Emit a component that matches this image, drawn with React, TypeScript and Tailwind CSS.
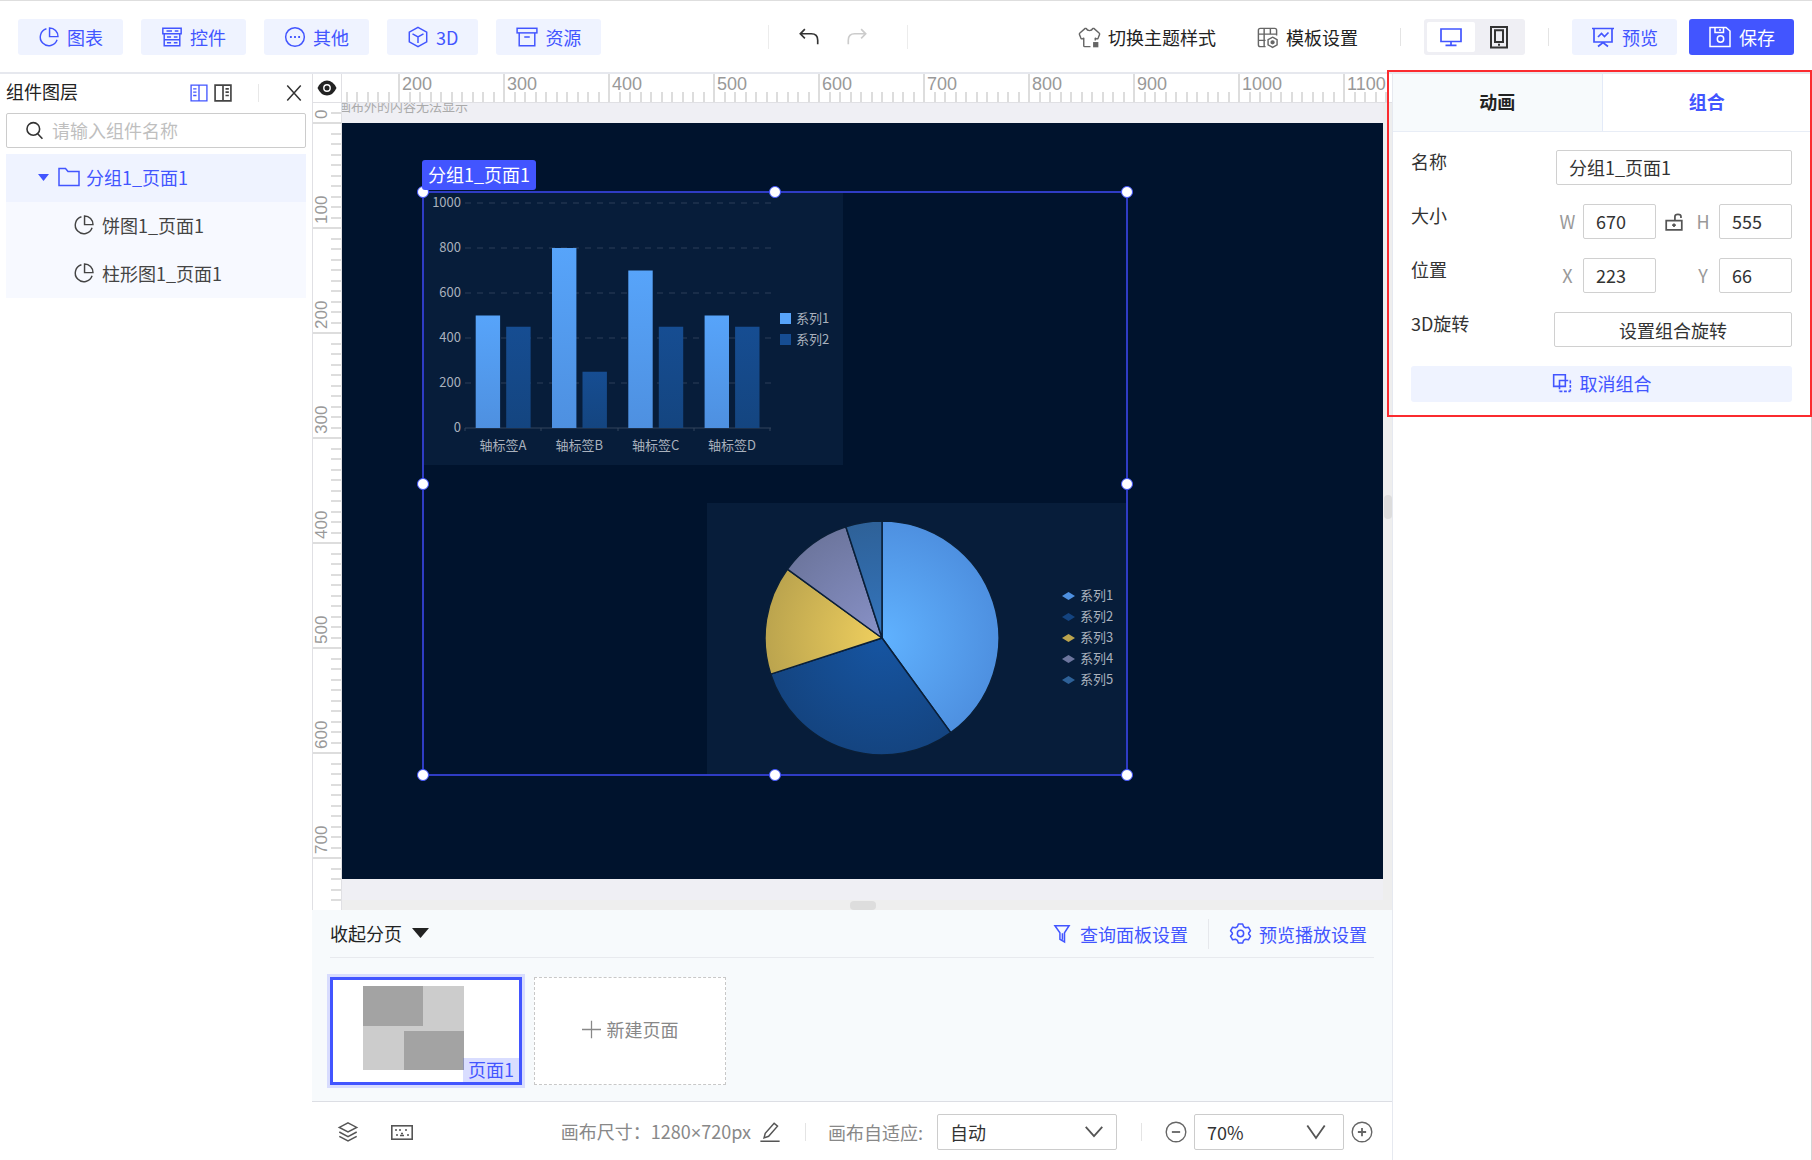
import type { ReactNode } from "react";

function Icon({ size = 22, sw = 1.6, children, className = "" }: { size?: number; sw?: number; children: ReactNode; className?: string }) {
  return (
    <svg width={size} height={size} viewBox="0 0 24 24" fill="none" stroke="currentColor" strokeWidth={sw} className={"shrink-0 " + className} aria-hidden="true">
      {children}
    </svg>
  );
}

const Pie = () => (
  <Icon>
    <path d="M9.2 3A9.4 9.4 0 1 0 20.8 15" />
    <path d="M12.6 2.2V11.6H21.8A9.2 9.2 0 0 0 12.6 2.2Z" />
  </Icon>
);
const Controls = () => (
  <Icon>
    <path d="M2 2.5H22V8.5H2ZM3.5 8.5V21.5H20.5V8.5M3.5 15H20.5M6 5.5H12M15 5.5H19M6.5 12H11M14 12H18M6.5 18.3H11M14 18.3H18" />
  </Icon>
);
const Other = () => (
  <Icon>
    <circle cx="12" cy="12" r="10.2" />
    <path d="M6.5 12H8.5M11 12H13M15.5 12H17.5" strokeWidth="2" />
  </Icon>
);
const Cube = () => (
  <Icon>
    <path d="M12 1.5L21.5 6.8V17.2L12 22.5L2.5 17.2V6.8Z M6 8.5L12 11.8L18 8.5M12 11.8V18.5" />
  </Icon>
);
const Archive = () => (
  <Icon>
    <rect x="1.2" y="2.5" width="21.6" height="5" />
    <path d="M3.5 7.5V21.5H20.5V7.5M9 12H15" />
  </Icon>
);

const tools = [
  { label: "图表", icon: <Pie /> },
  { label: "控件", icon: <Controls /> },
  { label: "其他", icon: <Other /> },
  { label: "3D", icon: <Cube /> },
  { label: "资源", icon: <Archive /> },
];

function Header() {
  return (
    <header className="flex h-[74px] shrink-0 items-center border-t border-b-2 border-t-[#dedede] border-b-[#e6e8ee] bg-white px-[18px] pt-px">
      <nav className="flex gap-[18px]">
        {tools.map((t) => (
          <button key={t.label} type="button" className="flex h-9 items-center gap-[7px] rounded-[3px] bg-[#eff3ff] px-5 text-[#4255ff]">
            {t.icon}
            {t.label}
          </button>
        ))}
      </nav>
      <div className="flex flex-1 items-center justify-center pr-[3px]">
        <span className="h-6 w-px bg-[#ececec]" />
        <button type="button" aria-label="撤销" className="ml-[29px] text-[#333]">
          <Icon size={22} sw={1.8}><path d="M7.5 3.5L2.5 8.5L7.5 13.5M2.5 8.5H14.5Q21.5 8.5 21.5 15.5V20" /></Icon>
        </button>
        <button type="button" aria-label="重做" className="mr-[39px] ml-[26px] text-[#ccc]">
          <Icon size={22} sw={1.8}><path d="M16.5 3.5L21.5 8.5L16.5 13.5M21.5 8.5H9.5Q2.5 8.5 2.5 15.5V20" /></Icon>
        </button>
        <span className="h-6 w-px bg-[#ececec]" />
      </div>
      <div className="flex items-center">
        <button type="button" className="flex items-center gap-[7px] text-[#222]">
          <Icon size={23} sw={1.5} className="text-[#666]">
            <path d="M13 21.5H7Q6 21.5 6 20.5V12.8L4.5 13.4Q3.5 13.6 3 12.6L1.5 8.8Q1.2 8 2 7.3L7.5 2.5H8.5Q9.5 4.8 12 4.8T15.5 2.5H16.5L22 7.3Q22.8 8 22.5 8.8L21 12.6Q20.5 13.6 19.5 13.4L18 12.8V15" strokeLinejoin="round" />
            <rect x="16.5" y="17.5" width="4" height="4" fill="currentColor" />
          </Icon>
          切换主题样式
        </button>
        <button type="button" className="ml-10 flex items-center gap-[7px] text-[#222]">
          <Icon size={23} sw={1.5} className="text-[#666]">
            <path d="M10 21.5H4.5Q2.5 21.5 2.5 19.5V4.5Q2.5 2.5 4.5 2.5H19.5Q21.5 2.5 21.5 4.5V10M2.5 8.5H21.5M8.5 2.5V21.5M15 2.5V8.5M2.5 15H10" />
            <path d="M17.3 11.7L22 14.3V19.7L17.3 22.3L12.6 19.7V14.3Z" />
            <circle cx="17.3" cy="17" r="1.5" fill="currentColor" />
          </Icon>
          模板设置
        </button>
        <span className="ml-[42px] h-[18px] w-px bg-[#e4e4e4]" />
        <div className="ml-[23px] flex h-9 items-center rounded-[3px] bg-[#efeff4] p-[3px]">
          <button type="button" aria-label="桌面端" className="flex h-[30px] w-12 items-center justify-center rounded-[2px] bg-white text-[#4255ff]">
            <Icon size={24} sw={1.7}><path d="M2 4H22V16.5H2ZM12 16.5V20M6.5 20.3H17.5" /></Icon>
          </button>
          <button type="button" aria-label="移动端" className="flex h-[30px] w-[47px] items-center justify-center text-[#333]">
            <Icon size={24} sw={2}><path d="M4 2H20V22.5H4ZM8 5.2H16V17H8ZM11 19.8H13" /></Icon>
          </button>
        </div>
        <span className="ml-[23px] h-[18px] w-px bg-[#e4e4e4]" />
        <button type="button" className="ml-[23px] flex h-9 items-center gap-[7px] rounded-[3px] bg-[#eff3ff] px-[19px] text-[#4255ff]">
          <Icon size={24} sw={1.7}><path d="M1 3.5H23M3 3.5V17H21V3.5M7 12L10.5 8.5L13.5 11.5L17.5 7.5M7 21.5L12 17.5L17 21.5" /></Icon>
          预览
        </button>
        <button type="button" className="ml-3 flex h-9 items-center gap-[7px] rounded-[3px] bg-[#4255ff] px-[19px] text-white">
          <Icon size={24} sw={1.5}><path d="M2 2.5H18L22 6V21.5H2ZM7 2.5V7.5H15.5V2.5M12 4V6" /><circle cx="12.5" cy="14" r="3.2" /></Icon>
          保存
        </button>
      </div>
    </header>
  );
}

function LayerPanel() {
  return (
    <aside className="w-[312px] shrink-0 bg-white px-[6px]">
      <div className="flex h-[39px] items-center pb-[2px]">
        <h2 className="flex-1 pb-1 text-[#222]">组件图层</h2>
        <button type="button" aria-label="左侧布局" className="text-[#4255ff]">
          <Icon size={20} sw={1.6}><path d="M2.5 2.5H21.5V21.5H2.5ZM12 2.5V21.5M5 7H9M5 11H9M5 15H9" /></Icon>
        </button>
        <button type="button" aria-label="右侧布局" className="ml-1 text-[#444]">
          <Icon size={20} sw={2}><path d="M2.5 2.5H21.5V21.5H2.5ZM12 2.5V21.5M15 7H19M15 11H19M15 15H19" /></Icon>
        </button>
        <span className="ml-[25px] h-[18px] w-px bg-[#e8e8e8]" />
        <button type="button" aria-label="关闭" className="mr-[3px] ml-[26px] text-[#333]">
          <Icon size={18} sw={2}><path d="M3 2L21 22M21 2L3 22" /></Icon>
        </button>
      </div>
      <label className="flex h-[35px] items-center rounded-[2px] border border-[#ccc] pl-[18px] text-[#333]">
        <Icon size={19} sw={2}><circle cx="10.5" cy="10" r="8" /><path d="M16 16L22 22.5" /></Icon>
        <input aria-label="请输入组件名称" placeholder="请输入组件名称" className="ml-2 w-full min-w-0 pb-[2px] outline-none placeholder:text-[#bfbfbf]" />
      </label>
      <ul className="mt-[6px] text-[#444]">
        <li>
          <button type="button" className="flex h-12 w-full items-center bg-[#eff3ff] pb-[2px] pl-8 text-[#4255ff]">
            <svg width="11" height="7" viewBox="0 0 11 7" aria-hidden="true"><path d="M0 0H11L5.5 7Z" fill="currentColor" /></svg>
            <Icon size={24} sw={1.5} className="mr-[5px] ml-[8px]"><path d="M2 3.5H8.5L11 6.5H22V20.5H2Z" /></Icon>
            分组1_页面1
          </button>
        </li>
        {["饼图1_页面1", "柱形图1_页面1"].map((name) => (
          <li key={name}>
            <button type="button" className="flex h-12 w-full items-center gap-[7px] bg-[#f7f9ff] pb-[2px] pl-[67px]">
              <Pie />
              {name}
            </button>
          </li>
        ))}
      </ul>
    </aside>
  );
}

const minor = Array.from({ length: 10 }, (_, i) => i);

function TopRuler() {
  return (
    <div className="flex h-[29px] min-w-0 flex-1 overflow-hidden border-b border-[#e0e0e4] bg-white">
      <div className="-ml-[49px] flex">
        {Array.from({ length: 11 }, (_, i) => (
          <div key={i} className="flex w-[105px] shrink-0 flex-col border-l-2 border-[#ddd]">
            <span className="h-[18px] pl-[2px] font-['Liberation_Sans',sans-serif] text-[18px] leading-[20px] text-[#999]">{i > 0 && (i + 1) * 100}</span>
            <div className="-ml-[2px] flex flex-1">
              {minor.map((m) => (
                <span key={m} className="flex-1 border-l-2 border-[#ddd]" />
              ))}
            </div>
          </div>
        ))}
      </div>
    </div>
  );
}

function SideRuler() {
  return (
    <div className="w-[30px] shrink-0 overflow-hidden border-r border-l border-[#e0e0e4] bg-white">
      <div className="-mt-[84px]">
        {Array.from({ length: 9 }, (_, i) => (
          <div key={i} className="flex h-[105px] border-b-2 border-[#ddd]">
            <span className="w-[18px] rotate-180 pt-[3px] font-['Liberation_Sans',sans-serif] text-[17px] leading-[18px] text-[#999] [writing-mode:vertical-rl]">{i < 8 && i * 100}</span>
            <div className="-mb-[2px] flex flex-1 flex-col">
              {minor.map((m) => (
                <span key={m} className="flex-1 border-b-2 border-[#ddd]" />
              ))}
            </div>
          </div>
        ))}
      </div>
    </div>
  );
}

const bars = [
  { name: "轴标签A", a: 500, b: 450 },
  { name: "轴标签B", a: 800, b: 250 },
  { name: "轴标签C", a: 700, b: 450 },
  { name: "轴标签D", a: 500, b: 450 },
];

function BarChart() {
  const y = (v: number) => 235 - v * 0.225;
  return (
    <svg width="419" height="272" viewBox="0 0 419 272" className="absolute top-[70px] left-[82px] bg-[#071d3a] text-[13px]" role="img" aria-label="柱形图1_页面1">
      <defs>
        <linearGradient id="barA" x1="0" y1="0" x2="0" y2="1"><stop offset="0" stopColor="#57a4fa" /><stop offset="1" stopColor="#4e90e0" /></linearGradient>
        <linearGradient id="barB" x1="0" y1="0" x2="0" y2="1"><stop offset="0" stopColor="#164d92" /><stop offset="1" stopColor="#144580" /></linearGradient>
      </defs>
      {[0, 200, 400, 600, 800, 1000].map((v) => (
        <g key={v}>
          <text x="37" y={y(v) + 4} textAnchor="end" fill="#a9b1bd">{v}</text>
          <path d={`M41 ${y(v)}H347`} stroke={v ? "#2c3f58" : "#33455c"} strokeWidth="1.2" strokeDasharray={v ? "6 6" : undefined} />
        </g>
      ))}
      {[41, 117, 194, 270, 346].map((x) => <path key={x} d={`M${x} 235V238`} stroke="#33455c" />)}
      {bars.map((d, i) => (
        <g key={d.name}>
          <rect x={51.7 + i * 76.3} y={y(d.a)} width="24.4" height={235 - y(d.a)} fill="url(#barA)" />
          <rect x={82.2 + i * 76.3} y={y(d.b)} width="24.4" height={235 - y(d.b)} fill="url(#barB)" />
          <text x={79 + i * 76.3} y="257" textAnchor="middle" fill="#a9b1bd">{d.name}</text>
        </g>
      ))}
      <rect x="356" y="120" width="11" height="11" fill="#57a4fa" />
      <text x="372" y="130" fill="#a9b1bd">系列1</text>
      <rect x="356" y="141" width="11" height="11" fill="#164d92" />
      <text x="372" y="151" fill="#a9b1bd">系列2</text>
    </svg>
  );
}

const slices = [
  { name: "系列1", value: 40, inner: "#60b2ff", outer: "#4e90e0" },
  { name: "系列2", value: 30, inner: "#1655a2", outer: "#144480" },
  { name: "系列3", value: 15, inner: "#efcf5e", outer: "#bba44e" },
  { name: "系列4", value: 10, inner: "#8992c8", outer: "#6d769e" },
  { name: "系列5", value: 5, inner: "#3475bd", outer: "#2e6198" },
];

function PieChart() {
  const cx = 175;
  const cy = 135;
  const r = 117;
  let acc = 0;
  const point = (p: number) => {
    const t = (p / 100) * Math.PI * 2;
    return `${(cx + r * Math.sin(t)).toFixed(2)} ${(cy - r * Math.cos(t)).toFixed(2)}`;
  };
  return (
    <svg width="420" height="271" viewBox="0 0 420 271" className="absolute top-[380px] left-[365px] bg-[#071d3a] text-[13px]" role="img" aria-label="饼图1_页面1">
      {slices.map((s, i) => {
        const from = acc;
        acc += s.value;
        return (
          <g key={s.name}>
            <radialGradient id={`slice${i}`} gradientUnits="userSpaceOnUse" cx={cx} cy={cy} r={r}>
              <stop offset="0" stopColor={s.inner} />
              <stop offset="1" stopColor={s.outer} />
            </radialGradient>
            <path d={`M${cx} ${cy}L${point(from)}A${r} ${r} 0 0 1 ${point(acc)}Z`} fill={`url(#slice${i})`} stroke="#0a1f38" strokeWidth="1.5" strokeLinejoin="round" />
            <path d={`M355 ${93 + i * 21}L361.5 ${89 + i * 21}L368 ${93 + i * 21}L361.5 ${97 + i * 21}Z`} fill={s.outer} />
            <text x="373" y={97 + i * 21} fill="#a9b1bd">{s.name}</text>
          </g>
        );
      })}
    </svg>
  );
}

const handles = [
  "top-0 left-0", "top-0 left-1/2", "top-0 left-full",
  "top-1/2 left-0", "top-1/2 left-full",
  "top-full left-0", "top-full left-1/2", "top-full left-full",
];

function Stage() {
  return (
    <div className="flex min-h-0 flex-1 flex-col">
      <div className="flex shrink-0">
        <div className="flex w-[30px] items-center justify-center border-r border-b border-l border-[#e0e0e4] bg-white text-[#222]">
          <svg width="20" height="16" viewBox="0 0 20 16" aria-hidden="true">
            <path d="M0.5 8Q4 0.5 10 0.5T19.5 8Q16 15.5 10 15.5T0.5 8Z" fill="currentColor" />
            <circle cx="10" cy="8" r="3.2" fill="none" stroke="#fff" strokeWidth="1.4" />
          </svg>
        </div>
        <TopRuler />
      </div>
      <div className="flex min-h-0 flex-1">
        <SideRuler />
        <div className="flex min-w-0 flex-1 bg-[#efeff4]">
          <div className="flex min-w-0 flex-1 flex-col overflow-hidden">
            <p className="-mt-[7px] -ml-1 h-[27px] shrink-0 text-[13px] leading-[19px] text-[#aaa]">画布外的内容无法显示</p>
            <div className="relative h-[756px] shrink-0 overflow-hidden bg-[#00132d]">
              <BarChart />
              <PieChart />
              <div className="absolute top-[68px] left-20 h-[585px] w-[706px] border-2 border-[#2f3cc4]">
                <div className="absolute -inset-px">
                  {handles.map((pos) => (
                    <span key={pos} className={"absolute size-3 -translate-x-1/2 -translate-y-1/2 rounded-full border border-[#4255ff] bg-white " + pos} />
                  ))}
                </div>
              </div>
              <span className="absolute top-[37px] left-[80px] h-[30px] rounded-[3px] bg-[#4255ff] px-[6px] leading-[28px] text-white">分组1_页面1</span>
            </div>
            <div className="flex flex-1 flex-col justify-end">
              <div className="flex h-[10px] items-end justify-center bg-[#eee]">
                <span className="h-[9px] w-[26px] rounded-[4px] bg-[#ddd]" />
              </div>
            </div>
          </div>
          <div className="flex w-[9px] shrink-0 items-center justify-center bg-[#eee]">
            <span className="h-6 w-2 rounded-[4px] bg-[#ddd]" />
          </div>
        </div>
      </div>
    </div>
  );
}

function Pages() {
  return (
    <section className="shrink-0 border-b border-[#dcdee4] bg-[#f7fafc] px-[18px] pb-4">
      <div className="flex h-12 items-center border-b border-[#e8eaee]">
        <button type="button" className="flex items-center gap-[10px] pb-[2px] text-[#222]">
          收起分页
          <svg width="17" height="10" viewBox="0 0 17 10" aria-hidden="true"><path d="M0 0H17L8.5 10Z" fill="currentColor" /></svg>
        </button>
        <div className="ml-auto flex items-center pr-[7px] text-[#4255ff]">
          <button type="button" className="flex items-center gap-2">
            <Icon size={20} sw={1.8}><path d="M3.5 2H20.5L15 10.5V21.5L9.5 18.5V10.5ZM12.5 11V19" /></Icon>
            查询面板设置
          </button>
          <span className="mx-5 h-[30px] w-px bg-[#e6e8ec]" />
          <button type="button" className="flex items-center gap-[7px]">
            <Icon size={23} sw={1.6}>
              <path d="M9.8 2H14.2L15.2 4.8L17.2 6L20.2 5.4L22.4 9.2L20.5 11.4V12.6L22.4 14.8L20.2 18.6L17.2 18L15.2 19.2L14.2 22H9.8L8.8 19.2L6.8 18L3.8 18.6L1.6 14.8L3.5 12.6V11.4L1.6 9.2L3.8 5.4L6.8 6L8.8 4.8Z" strokeLinejoin="round" />
              <circle cx="12" cy="12" r="3.3" />
            </Icon>
            预览播放设置
          </button>
        </div>
      </div>
      <div className="flex gap-3 pt-[19px]">
        <button type="button" className="relative flex h-[108px] w-48 justify-center border-[3px] border-[#4255ff] bg-white pt-[6px] pr-[25px] ring-3 ring-[#d8dcfe]">
          <span className="flex h-[84px] w-[101px] flex-col justify-between bg-[#ccc]">
            <span className="h-10 w-[60px] bg-[#a3a3a3]" />
            <span className="h-[39px] w-[60px] self-end bg-[#a3a3a3]" />
          </span>
          <span className="absolute right-0 bottom-0 h-6 bg-[#4255ff]/20 px-[5px] leading-[22px] text-[#4255ff]">页面1</span>
        </button>
        <button type="button" className="flex h-[108px] w-48 items-center justify-center gap-[6px] border border-dashed border-[#c8c8c8] bg-white pb-1 text-[#888]">
          <Icon size={19} sw={1.6}><path d="M12 1V23M0 12H24" /></Icon>
          新建页面
        </button>
      </div>
    </section>
  );
}

function Picker({ label, value, width, steep }: { label: string; value: string; width: string; steep?: boolean }) {
  return (
    <span className={"relative flex " + width}>
      <select aria-label={label} defaultValue={value} className="h-9 w-full appearance-none rounded-[2px] border border-[#ccc] bg-white pl-3 text-[#333]">
        <option>{value}</option>
      </select>
      <Icon size={22} sw={2} className={"pointer-events-none absolute top-[7px] text-[#555] " + (steep ? "right-[17px]" : "right-3")}>
        <path d={steep ? "M2.5 5L12 18.5L21.5 5" : "M3 6.5L12 16.5L21 6.5"} />
      </Icon>
    </span>
  );
}

function StatusBar() {
  return (
    <footer className="flex h-[58px] shrink-0 items-center bg-white pt-[2px] pr-[19px] pl-[25px] text-[#888]">
      <button type="button" aria-label="图层" className="text-[#555]">
        <Icon size={22} sw={1.6}><path d="M12 2L21.5 7L12 12L2.5 7ZM2.5 12L12 17L21.5 12M2.5 16.8L12 21.8L21.5 16.8" /></Icon>
      </button>
      <button type="button" aria-label="键盘" className="ml-8 text-[#555]">
        <svg width="22" height="15" viewBox="0 0 22 15" fill="none" stroke="currentColor" strokeWidth="1.6" aria-hidden="true">
          <rect x="0.8" y="0.8" width="20.4" height="13.4" />
          <path d="M4 5H6M8 5H10M14 5H16M5 10H7M10 8.5H12M9 10.5H13M16 10H18" strokeWidth="1.3" />
        </svg>
      </button>
      <div className="ml-auto flex items-center">
        <span>
          画布尺寸：1280<span className="font-['Liberation_Sans',sans-serif]">×</span>720px
        </span>
        <button type="button" aria-label="编辑画布尺寸" className="ml-2 text-[#555]">
          <Icon size={22} sw={1.6}><path d="M5.5 18.5L6.8 13.5L16.5 2.5L20.2 5.6L10.5 16.7ZM1.5 22H22.5" /></Icon>
        </button>
        <span className="mr-[22px] ml-6 h-[18px] w-px bg-[#e4e4e4]" />
        <span className="mr-[14px]">画布自适应:</span>
        <Picker label="画布自适应" value="自动" width="w-[180px]" />
        <span className="mr-[23px] ml-[24px] h-[18px] w-px bg-[#e4e4e4]" />
        <button type="button" aria-label="缩小" className="mr-[7px] text-[#666]">
          <Icon size={22} sw={1.5}><circle cx="12" cy="12" r="10.7" /><path d="M7.5 12H16.5" strokeWidth="2" /></Icon>
        </button>
        <Picker label="缩放比例" value="70%" width="w-[150px]" steep />
        <button type="button" aria-label="放大" className="ml-[7px] text-[#666]">
          <Icon size={22} sw={1.5}><circle cx="12" cy="12" r="10.7" /><path d="M7.5 12H16.5M12 7.5V16.5" strokeWidth="2" /></Icon>
        </button>
      </div>
    </footer>
  );
}

const field = "h-[35px] w-full min-w-0 rounded-[2px] border border-[#d0d0d0] bg-white pb-[2px] pl-3 text-[#333] outline-none";

function NumberPair({ a, b, lock }: { a: [string, string]; b: [string, string]; lock?: boolean }) {
  return (
    <div className="grid w-[236px] grid-cols-[27px_73px_35px_28px_73px] items-center">
      <label htmlFor={a[0]} className="pr-1 pb-[2px] text-center text-[#999]">{a[0]}</label>
      <input id={a[0]} defaultValue={a[1]} className={field} />
      {lock ? (
        <button type="button" aria-label="锁定比例" className="flex justify-center text-[#555]">
          <Icon size={22} sw={1.9}><path d="M3.5 10.5H20.5V20.5H3.5ZM13 10.5V6Q13 3.8 16.3 3.8T19.6 6V7.5M12 13.5V17.5M10 15.5H14" /></Icon>
        </button>
      ) : (
        <span />
      )}
      <label htmlFor={b[0]} className="pr-1 pb-[2px] text-center text-[#999]">{b[0]}</label>
      <input id={b[0]} defaultValue={b[1]} className={field} />
    </div>
  );
}

function PropertyPanel() {
  return (
    <aside className="w-[420px] shrink-0 border-r border-l border-r-[#d4d4d4] border-l-[#e6e9f0] bg-white">
      <section className="relative">
        <div className="flex h-[58px] border-b border-[#e8edf6] font-bold" role="tablist">
          <button type="button" role="tab" aria-selected="false" className="flex-1 border-r border-[#e3eaf8] bg-[#f7fafc] pb-1 text-[#222]">动画</button>
          <button type="button" role="tab" aria-selected="true" className="flex-1 pb-1 text-[#4255ff]">组合</button>
        </div>
        <form className="flex flex-col gap-[19px] pt-[18px] pr-[19px] pb-[14px] pl-[18px] text-[#333]">
          <div className="flex justify-between">
            <label htmlFor="name" className="leading-[22px]">名称</label>
            <div className="w-[236px]"><input id="name" defaultValue="分组1_页面1" className={field} /></div>
          </div>
          <div className="flex justify-between">
            <span className="leading-[22px]">大小</span>
            <NumberPair a={["W", "670"]} b={["H", "555"]} lock />
          </div>
          <div className="flex justify-between">
            <span className="leading-[22px]">位置</span>
            <NumberPair a={["X", "223"]} b={["Y", "66"]} />
          </div>
          <div className="flex justify-between">
            <span className="leading-[22px]">3D旋转</span>
            <button type="button" className="h-[35px] w-[238px] rounded-[2px] border border-[#d0d0d0]">设置组合旋转</button>
          </div>
          <button type="button" className="flex h-9 items-center justify-center gap-2 rounded-[3px] bg-[#eff3ff] pb-[2px] text-[#4255ff]">
            <Icon size={20} sw={1.9}>
              <path d="M2 2H16V16H2ZM9 16V9H16" />
              <path d="M9 16V22M22 9V22M16 9H22M9 22H22" strokeDasharray="3.5 1.8" />
            </Icon>
            取消组合
          </button>
        </form>
        <div className="pointer-events-none absolute -top-1 -right-px -bottom-px -left-[6px] border-2 border-[#fb2b2f]" />
      </section>
    </aside>
  );
}

export default function App() {
  return (
    <div className="flex h-screen flex-col overflow-hidden bg-white font-['Noto_Sans_CJK_SC',sans-serif] text-[18px] leading-[26px]">
      <Header />
      <div className="flex min-h-0 flex-1">
        <LayerPanel />
        <main className="flex min-w-0 flex-1 flex-col">
          <Stage />
          <Pages />
          <StatusBar />
        </main>
        <PropertyPanel />
      </div>
    </div>
  );
}
